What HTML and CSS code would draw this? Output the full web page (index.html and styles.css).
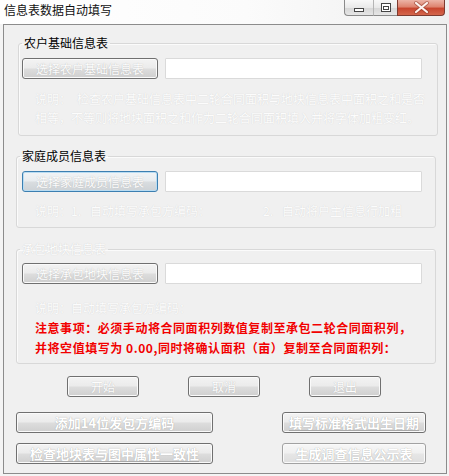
FILE: index.html
```html
<!DOCTYPE html>
<html lang="zh-CN">
<head>
<meta charset="utf-8">
<title>信息表数据自动填写</title>
<link rel="stylesheet" href="styles.css">
</head>
<body>
<div class="titlebar">
  <span class="title">信息表数据自动填写</span>
  <div class="controls">
    <span class="ctl ctl-min"><svg width="28" height="15" viewBox="0 0 28 15"><rect x="9.5" y="8.5" width="9" height="3" fill="#fff" stroke="#454545"/></svg></span>
    <span class="ctl ctl-max"><svg width="24" height="15" viewBox="0 0 24 15"><rect x="7.5" y="3.5" width="9" height="8" fill="#fff" stroke="#454545"/><rect x="9.5" y="6.5" width="5" height="3" fill="#fff" stroke="#454545"/></svg></span>
    <span class="ctl ctl-close"><svg width="47" height="15" viewBox="0 0 47 15"><path d="M18 3 L29 12 M29 3 L18 12" stroke="#8a3626" stroke-width="4" stroke-linecap="round" fill="none" opacity="0.55"/><path d="M18 3 L29 12 M29 3 L18 12" stroke="#fdf3f0" stroke-width="2.2" stroke-linecap="round" fill="none"/></svg></span>
  </div>
</div>

<div class="panel">
  <fieldset class="group group-first">
    <legend class="legend">农户基础信息表</legend>
    <div class="row">
      <button class="btn btn-select" type="button">选择农户基础信息表</button>
      <input class="path" type="text">
    </div>
    <p class="desc">说明：<span class="gap6"></span>检查农户基础信息表中二轮合同面积与地块信息表中面积之和是否<br>相等，不等则将地块面积之和作为二轮合同面积填入并将字体加粗变红。</p>
  </fieldset>

  <fieldset class="group group-second">
    <legend class="legend">家庭成员信息表</legend>
    <div class="row">
      <button class="btn btn-select btn-focus" type="button">选择家庭成员信息表</button>
      <input class="path" type="text">
    </div>
    <p class="desc">说明：1.<span class="gap9"></span>自动填写承包方编码：<span class="gap53"></span>2.<span class="gap9"></span>自动将户主信息行加粗</p>
  </fieldset>

  <fieldset class="group group-third">
    <legend class="legend legend-disabled">承包地块信息表</legend>
    <div class="row">
      <button class="btn btn-select" type="button">选择承包地块信息表</button>
      <input class="path" type="text">
    </div>
    <div class="notes">
      <p class="desc desc-tight">说明：自动填写承包方编码：</p>
      <p class="warn">注意事项：必须手动将合同面积列数值复制至承包二轮合同面积列，</p>
      <p class="warn">并将空值填写为 0.00,同时将确认面积（亩）复制至合同面积列：</p>
    </div>
  </fieldset>

  <div class="actions">
    <button class="btn btn-action" type="button">开始</button>
    <button class="btn btn-action" type="button">取消</button>
    <button class="btn btn-action" type="button">退出</button>
  </div>

  <div class="tools">
    <button class="btn btn-tool" type="button">添加14位发包方编码</button>
    <button class="btn btn-tool btn-ul" type="button">填写标准格式出生日期</button>
    <button class="btn btn-tool btn-ul" type="button">检查地块表与图中属性一致性</button>
    <button class="btn btn-tool btn-soft" type="button">生成调查信息公示表</button>
  </div>
</div>
</body>
</html>
```

FILE: styles.css
```css
* {
  box-sizing: border-box;
}

html,
body {
  margin: 0;
  padding: 0;
}

body {
  width: 449px;
  height: 476px;
  overflow: hidden;
  background: #f4f4f4;
  font-family: "Noto Sans CJK SC", "Liberation Sans", sans-serif;
  font-size: 12px;
  color: #000;
}

/* ---------- title bar ---------- */
.titlebar {
  height: 24px;
  display: flex;
  justify-content: space-between;
  align-items: flex-start;
  background: linear-gradient(to right, #ffffff 0%, #fbfbfb 55%, #efefef 100%);
}

.title {
  padding-left: 4px;
  line-height: 20px;
  font-size: 12px;
  color: #111;
}

.controls {
  display: flex;
  margin-right: 4px;
  height: 16px;
}

.ctl {
  display: block;
  height: 16px;
  border: 1px solid #8a8a8a;
  border-top: none;
}

.ctl svg {
  display: block;
}

.ctl-min {
  width: 29px;
  border-right: none;
  border-radius: 0 0 0 4px;
  background: linear-gradient(#f8f8f8 0%, #e9e9e9 50%, #d6d6d6 52%, #e6e6e6 100%);
}

.ctl-max {
  width: 24px;
  border-right: none;
  border-left-color: #b5b5b5;
  background: linear-gradient(#f8f8f8 0%, #e9e9e9 50%, #d6d6d6 52%, #e6e6e6 100%);
}

.ctl-close {
  width: 48px;
  border-color: #7d3b30;
  border-radius: 0 0 4px 0;
  background: linear-gradient(#ecb4a7 0%, #de8470 45%, #c8462f 56%, #d4664c 100%);
}

/* ---------- main panel ---------- */
.panel {
  margin-left: 3px;
  width: 444px;
  height: 450px;
  border: 1px solid #8c8c8c;
  background: #f0f0f0;
  padding-top: 11px;
}

.group {
  width: 420px;
  margin: 0;
  padding: 0 0 8px 0;
  border: 1px solid #d8d8d8;
  border-radius: 3px;
  box-shadow: inset 1px 1px 0 #fbfbfb;
  min-inline-size: 0;
}

.group-first {
  margin-left: 14px;
}

.group-second {
  margin-left: 12px;
  margin-top: 13px;
  padding-bottom: 7px;
}

.group-third {
  margin-left: 12px;
  margin-top: 14px;
  padding-bottom: 5px;
}

.legend {
  margin-left: 3px;
  padding: 0 2px;
  line-height: 14px;
  font-size: 12px;
  color: #000;
}

.legend-disabled {
  color: #fdfdfd;
  text-shadow: 0 0 1px #c4c4c4;
}

.row {
  display: flex;
  align-items: center;
  gap: 7px;
  margin-top: 8px;
  padding-left: 5px;
}

.group-first .row {
  padding-left: 3px;
}

.group-third .row {
  margin-top: 7px;
}

/* ---------- buttons ---------- */
.btn {
  margin: 0;
  padding: 0;
  height: 21px;
  border: 1px solid #707070;
  border-radius: 3px;
  background: linear-gradient(#f3f3f3 0%, #ebebeb 48%, #dddddd 52%, #cfcfcf 100%);
  box-shadow: inset 0 0 0 1px #fafafa;
  font-family: "Noto Sans CJK SC", "Liberation Sans", sans-serif;
  font-size: 12px;
  line-height: 19px;
  color: #fdfdfd;
  text-shadow: 0 0 1px #b0b0b0;
  text-align: center;
  white-space: nowrap;
}

.btn-select {
  width: 136px;
}

.btn-focus {
  border-color: #3c7fb1;
  box-shadow: inset 0 0 0 1px #b9dcf2;
  background: linear-gradient(#f1f4f6 0%, #e8ecef 48%, #d9dde0 52%, #cdd2d6 100%);
}

.path {
  width: 257px;
  height: 21px;
  margin: 0;
  border: 1px solid #dadada;
  border-radius: 1px;
  background: #ffffff;
  padding: 0;
}

/* ---------- descriptions ---------- */
.desc {
  margin: 10px 0 0 0;
  padding-left: 18px;
  line-height: 19px;
  font-size: 12px;
  color: #fcfcfc;
  text-shadow: 0 0 1px #cdcdcd;
  white-space: nowrap;
}

.group-first .desc {
  padding-left: 16px;
}

.group-second .desc {
  margin-top: 9px;
}

.gap6 {
  display: inline-block;
  width: 6px;
}

.gap9 {
  display: inline-block;
  width: 9px;
}

.gap53 {
  display: inline-block;
  width: 53px;
}

.notes {
  margin-top: 14px;
  padding-left: 18px;
}

.notes .desc-tight {
  margin: 0;
  padding-left: 0;
  line-height: 20px;
}

.warn {
  margin: 0;
  line-height: 20px;
  font-size: 12px;
  font-weight: bold;
  letter-spacing: 0.55px;
  color: #f20000;
  white-space: nowrap;
}

/* ---------- action buttons ---------- */
.actions {
  display: flex;
  gap: 49px;
  margin-top: 12px;
  padding-left: 63px;
}

.btn-action {
  width: 72px;
}

.tools {
  display: grid;
  grid-template-columns: 197px 144px;
  column-gap: 69px;
  row-gap: 10px;
  margin-top: 15px;
  padding-left: 12px;
}

.btn-tool {
  width: 100%;
  font-size: 13px;
  font-weight: bold;
  color: #ffffff;
  text-shadow: 0 0 1px #9a9a9a;
}

.btn-ul {
  text-decoration: underline;
  text-decoration-color: #a9a9a9;
  text-underline-offset: 2px;
}

.btn-soft {
  border-color: #a2a2a2;
  background: linear-gradient(#f7f7f7 0%, #f0f0f0 48%, #e6e6e6 52%, #dedede 100%);
}
```
